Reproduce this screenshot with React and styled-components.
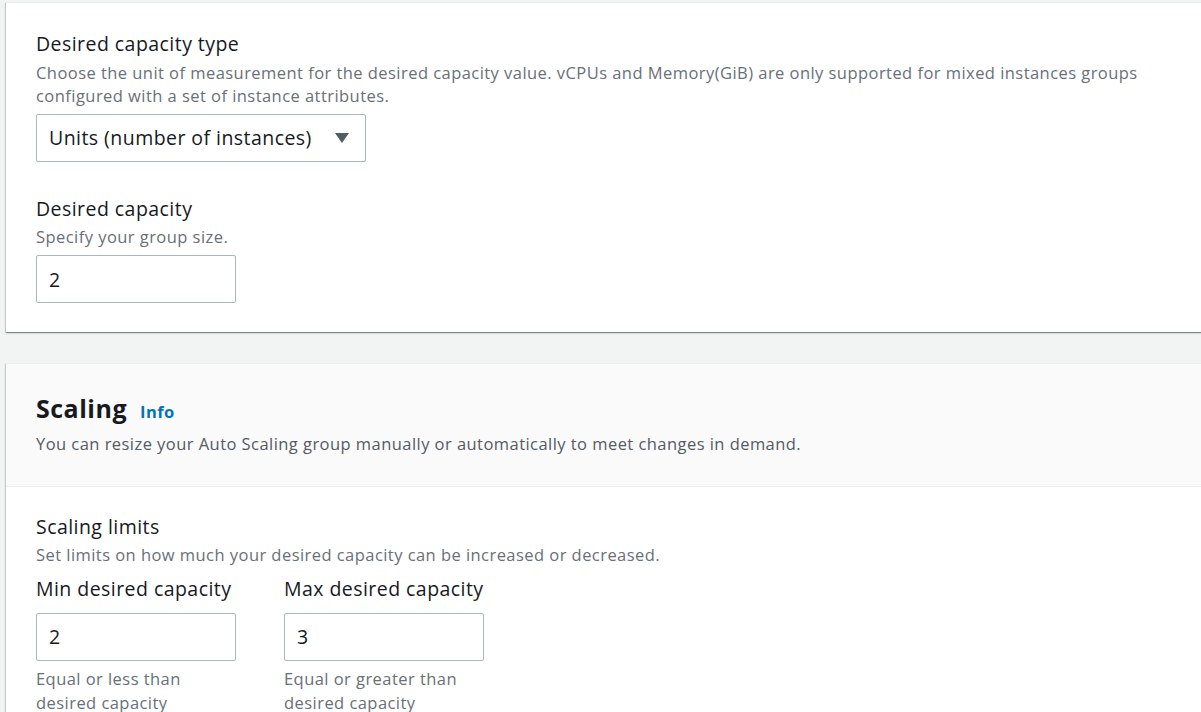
import { createGlobalStyle, styled } from "styled-components";

const GlobalStyle = createGlobalStyle`
  html, body {
    margin: 0;
    padding: 0;
    background-color: #f2f3f3;
    overflow: hidden;
  }
  body {
    font-family: "Open Sans", "Noto Sans", Arial, sans-serif;
    color: #16191f;
    letter-spacing: 0.45px;
  }
`;

const Page = styled.div`
  padding: 2px 0 0 6px;
  margin-right: -12px;
  display: flex;
  flex-direction: column;
  gap: 31px;
`;

const Card = styled.section`
  background-color: #ffffff;
  border-top: 1px solid #eaeded;
  box-shadow: 0 1px 1px 0 rgba(0, 28, 36, 0.3),
    1px 1px 1px 0 rgba(0, 28, 36, 0.15), -1px 1px 1px 0 rgba(0, 28, 36, 0.15);
`;

const CardHeader = styled.header`
  background-color: #fafafa;
  border-bottom: 1px solid #eaeded;
  padding: 29px 30px 30px;
`;

const CardBody = styled.div`
  padding: ${(p) => p.$pad || "28px 30px 30px"};
  display: flex;
  flex-direction: column;
  gap: 33px;
`;

const TitleRow = styled.div`
  display: flex;
  align-items: baseline;
  gap: 13px;
`;

const Title = styled.h2`
  margin: 0;
  font-size: 25px;
  line-height: 30px;
  font-weight: 700;
  letter-spacing: 0.5px;
  color: #16191f;
`;

const InfoLink = styled.a`
  font-size: 16.5px;
  font-weight: 700;
  color: #0073bb;
  text-decoration: none;
  cursor: pointer;
`;

const HeaderDesc = styled.p`
  margin: 10px 0 0;
  font-size: 16.5px;
  line-height: 22.5px;
  color: #545b64;
`;

const Field = styled.div`
  display: flex;
  flex-direction: column;
`;

const Label = styled.label`
  font-size: 19.5px;
  line-height: 27.5px;
  color: #16191f;
`;

const Description = styled.div`
  font-size: 16.5px;
  line-height: 23px;
  color: #687078;
  margin-top: 3px;
`;

const Control = styled.div`
  margin-top: ${(p) => p.$top || "7px"};
`;

const SelectBox = styled.div`
  box-sizing: border-box;
  width: 330px;
  height: 48px;
  border: 1px solid #aab7b8;
  border-radius: 2px;
  padding: 0 16px 0 12px;
  display: flex;
  align-items: center;
  justify-content: space-between;
  font-size: 19.5px;
  color: #16191f;
  background: #ffffff;
`;

const Caret = styled.span`
  width: 0;
  height: 0;
  border-left: 7.5px solid transparent;
  border-right: 7.5px solid transparent;
  border-top: 10px solid #545b64;
`;

const Input = styled.input`
  box-sizing: border-box;
  width: ${(p) => p.$width || "200px"};
  height: 48px;
  border: 1px solid #aab7b8;
  border-radius: 2px;
  padding: 0 12px;
  font-family: inherit;
  font-size: 19.5px;
  letter-spacing: 0.45px;
  color: #16191f;
  background: #ffffff;
  outline: none;
`;

const Columns = styled.div`
  display: grid;
  grid-template-columns: 200px 200px;
  column-gap: 48px;
  margin-top: 9px;
`;

const Constraint = styled.div`
  font-size: 16.5px;
  line-height: 24px;
  color: #687078;
  margin-top: 6px;
`;

function SelectField({ label, description, value }) {
  return (
    <Field>
      <Label>{label}</Label>
      <Description>{description}</Description>
      <Control>
        <SelectBox>
          <span>{value}</span>
          <Caret />
        </SelectBox>
      </Control>
    </Field>
  );
}

function LimitField({ label, value, constraint }) {
  return (
    <Field>
      <Label>{label}</Label>
      <Control $top="10px">
        <Input defaultValue={value} />
      </Control>
      <Constraint>{constraint}</Constraint>
    </Field>
  );
}

export default function App() {
  return (
    <>
      <GlobalStyle />
      <Page>
        <Card>
          <CardBody $pad="27px 30px 29px">
            <SelectField
              label="Desired capacity type"
              description="Choose the unit of measurement for the desired capacity value. vCPUs and Memory(GiB) are only supported for mixed instances groups configured with a set of instance attributes."
              value="Units (number of instances)"
            />
            <Field>
              <Label>Desired capacity</Label>
              <Description>Specify your group size.</Description>
              <Control>
                <Input defaultValue="2" />
              </Control>
            </Field>
          </CardBody>
        </Card>

        <Card>
          <CardHeader>
            <TitleRow>
              <Title>Scaling</Title>
              <InfoLink>Info</InfoLink>
            </TitleRow>
            <HeaderDesc>
              You can resize your Auto Scaling group manually or automatically to
              meet changes in demand.
            </HeaderDesc>
          </CardHeader>
          <CardBody $pad="26px 30px 30px">
            <Field>
              <Label>Scaling limits</Label>
              <Description>
                Set limits on how much your desired capacity can be increased or
                decreased.
              </Description>
              <Columns>
                <LimitField
                  label="Min desired capacity"
                  value="2"
                  constraint="Equal or less than desired capacity"
                />
                <LimitField
                  label="Max desired capacity"
                  value="3"
                  constraint="Equal or greater than desired capacity"
                />
              </Columns>
            </Field>
          </CardBody>
        </Card>
      </Page>
    </>
  );
}
